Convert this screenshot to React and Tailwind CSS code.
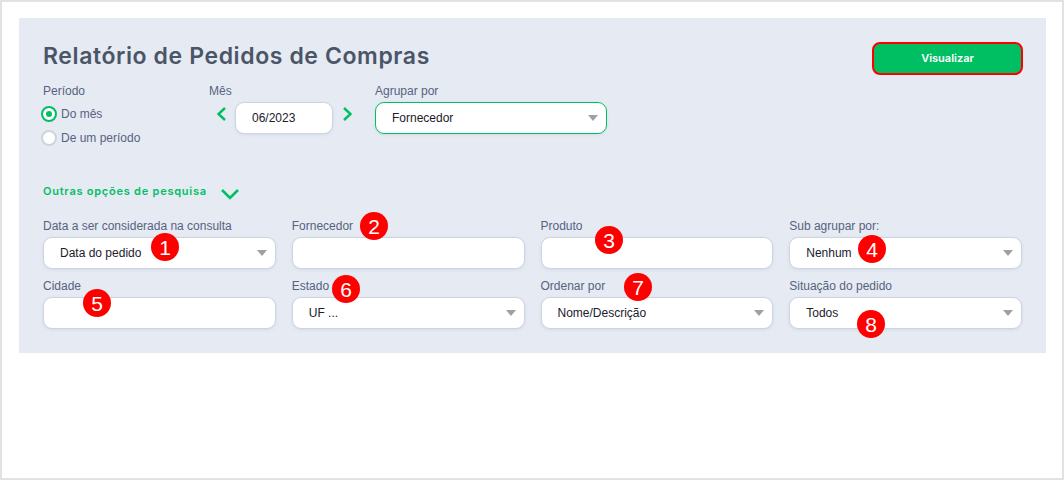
const sans = "font-['Liberation_Sans',Arial,sans-serif]";

function Label({ children, className = "" }) {
  return <div className={`h-5 text-[12px] leading-5 text-[#566380] ${className}`}>{children}</div>;
}

function Caret() {
  return (
    <svg width="10" height="6" viewBox="0 0 10 6" className="absolute right-[8px] top-1/2 -mt-[3px]">
      <path d="M0 0H10L5 6Z" fill="#a0a0a0" />
    </svg>
  );
}

function Box({ value, select, green, className = "" }) {
  return (
    <div
      className={`relative flex h-8 items-center rounded-[9px] border bg-white pl-4 text-[12px] text-[#1a202c] shadow-[0_1px_3px_rgba(160,174,192,0.25)] ${green ? "border-[#00bf63]" : "border-[#cbd5e0]"} ${className}`}
    >
      {value}
      {select && <Caret />}
    </div>
  );
}

function Field({ label, value, select }) {
  return (
    <div>
      <Label className="mb-[1px]">{label}</Label>
      <Box value={value} select={select} />
    </div>
  );
}

function Chevron({ dir }) {
  return (
    <svg width="9" height="14" viewBox="0 0 9 14" fill="none" stroke="#00bf63" strokeWidth="2.4">
      <path d={dir === "left" ? "M8 1 L1.5 7 L8 13" : "M1 1 L7.5 7 L1 13"} />
    </svg>
  );
}

function Radio({ checked, label }) {
  return (
    <div className="flex h-6 items-center text-[12px] text-[#566380]">
      <span
        className={`mr-[4px] -ml-[2px] flex h-4 w-4 items-center justify-center rounded-full border-2 bg-white ${checked ? "border-[#00bf63]" : "border-[#cbd5e0]"}`}
      >
        {checked && <span className="h-[6px] w-[6px] rounded-full bg-[#00bf63]" />}
      </span>
      {label}
    </div>
  );
}

function Pin({ n, className }) {
  return (
    <div
      className={`absolute flex h-[28px] w-[28px] items-center justify-center rounded-full bg-[#fe0000] text-[21px] leading-none text-white ${className}`}
    >
      {n}
    </div>
  );
}

export default function App() {
  return (
    <div className={`relative h-[480px] w-[1064px] overflow-hidden border-2 border-[#e2e2e2] bg-white ${sans}`}>
      <div className="mt-4 ml-[17px] h-[335px] w-[1027px] bg-[#e6eaf3] px-6 pt-6">
        <div className="flex items-start justify-between">
          <h1 className="font-['Inter',sans-serif] text-[23px] leading-7 font-semibold tracking-[0.6px] text-[#4a5568]">
            Relatório de Pedidos de Compras
          </h1>
          <button className="h-[33px] w-[151px] -mr-[1px] rounded-[8px] border-2 border-[#fe0000] bg-[#00bf63] font-['Inter',sans-serif] text-[11px] font-semibold text-white">
            Visualizar
          </button>
        </div>

        <div className="mt-[6px] flex">
          <div className="w-[166px]">
            <Label className="mb-[1px]">Período</Label>
            <Radio checked label="Do mês" />
            <Radio label="De um período" />
          </div>
          <div className="w-[166px]">
            <Label className="mb-[1px]">Mês</Label>
            <div className="flex items-start">
              <span className="mt-[5px] ml-[8px] mr-[9px] flex w-[9px]"><Chevron dir="left" /></span>
              <Box value="06/2023" className="w-[98px]" />
              <span className="mt-[5px] ml-[10px] flex w-[9px]"><Chevron dir="right" /></span>
            </div>
          </div>
          <div className="w-[232px]">
            <Label className="mb-[1px]">Agrupar por</Label>
            <Box value="Fornecedor" select green />
          </div>
        </div>

        <div className="mt-[29px] flex h-6 items-center">
          <span className="font-['Inter',sans-serif] text-[11px] font-semibold tracking-[0.76px] text-[#00bf63]">
            Outras opções de pesquisa
          </span>
          <svg width="20" height="12" viewBox="0 0 20 12" fill="none" stroke="#00bf63" strokeWidth="2.6" className="ml-[13px] mt-[5px]">
            <path d="M2 2 L10 10 L18 2" />
          </svg>
        </div>

        <div className="mt-[13px] grid grid-cols-4 gap-x-4 gap-y-[7px]">
          <Field label="Data a ser considerada na consulta" value="Data do pedido" select />
          <Field label="Fornecedor" />
          <Field label="Produto" />
          <Field label="Sub agrupar por:" value="Nenhum" select />
          <Field label="Cidade" />
          <Field label="Estado" value="UF ..." select />
          <Field label="Ordenar por" value="Nome/Descrição" select />
          <Field label="Situação do pedido" value="Todos" select />
        </div>
      </div>

      <Pin n="1" className="left-[149px] top-[231px]" />
      <Pin n="2" className="left-[358px] top-[210px]" />
      <Pin n="3" className="left-[593px] top-[224px]" />
      <Pin n="4" className="left-[856px] top-[233px]" />
      <Pin n="5" className="left-[81px] top-[287px]" />
      <Pin n="6" className="left-[330px] top-[273px]" />
      <Pin n="7" className="left-[622px] top-[271px]" />
      <Pin n="8" className="left-[855px] top-[308px]" />
    </div>
  );
}
